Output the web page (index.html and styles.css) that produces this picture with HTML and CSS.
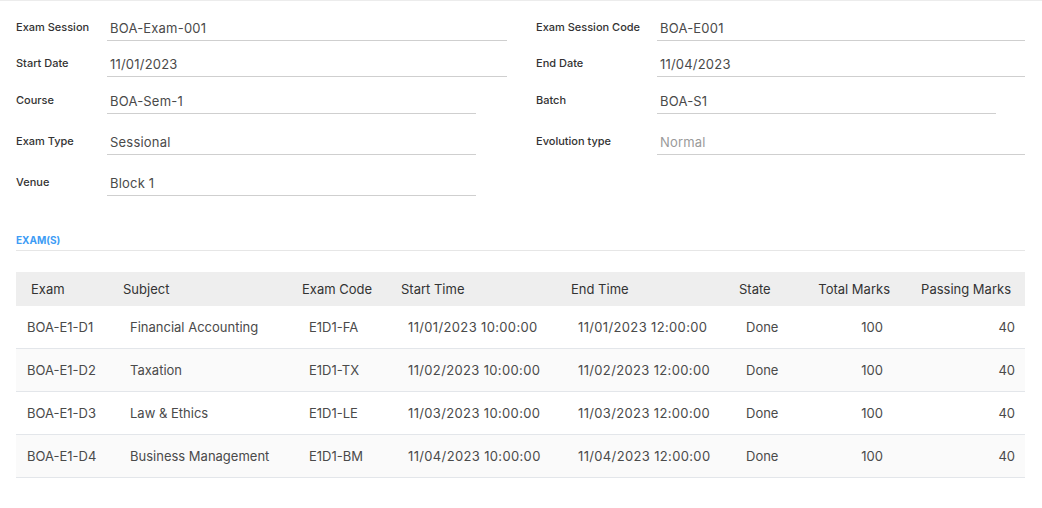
FILE: index.html
```html
<!DOCTYPE html>
<html lang="en">
<head>
<meta charset="utf-8">
<title>Exam Session</title>
<link rel="stylesheet" href="styles.css">
</head>
<body>
<div class="sheet">
  <div class="fields">
    <div class="field"><span class="label">Exam Session</span><span class="value">BOA-Exam-001</span></div>
    <div class="field field-r"><span class="label">Exam Session Code</span><span class="value">BOA-E001</span></div>

    <div class="field"><span class="label">Start Date</span><span class="value">11/01/2023</span></div>
    <div class="field field-r"><span class="label">End Date</span><span class="value">11/04/2023</span></div>

    <div class="field gap1"><span class="label">Course</span><span class="value short">BOA-Sem-1</span></div>
    <div class="field field-r gap1"><span class="label">Batch</span><span class="value short">BOA-S1</span></div>

    <div class="field gap5"><span class="label">Exam Type</span><span class="value short">Sessional</span></div>
    <div class="field field-r gap5"><span class="label">Evolution type</span><span class="value muted">Normal</span></div>

    <div class="field gap5"><span class="label">Venue</span><span class="value short">Block 1</span></div>
  </div>

  <div class="section-title">EXAM(S)</div>

  <table class="grid">
    <colgroup>
      <col class="c1"><col class="c2"><col class="c3"><col class="c4"><col class="c5"><col class="c6"><col class="c7"><col class="c8">
    </colgroup>
    <thead>
      <tr>
        <th class="k1">Exam</th>
        <th>Subject</th>
        <th>Exam Code</th>
        <th>Start Time</th>
        <th>End Time</th>
        <th>State</th>
        <th class="num h7">Total Marks</th>
        <th class="num h8">Passing Marks</th>
      </tr>
    </thead>
    <tbody>
      <tr>
        <td class="k1">BOA-E1-D1</td><td>Financial Accounting</td><td>E1D1-FA</td><td class="dt">11/01/2023 10:00:00</td><td class="dt">11/01/2023 12:00:00</td><td>Done</td><td class="num d7">100</td><td class="num d8">40</td>
      </tr>
      <tr class="alt">
        <td class="k1">BOA-E1-D2</td><td>Taxation</td><td>E1D1-TX</td><td class="dt">11/02/2023 10:00:00</td><td class="dt">11/02/2023 12:00:00</td><td>Done</td><td class="num d7">100</td><td class="num d8">40</td>
      </tr>
      <tr>
        <td class="k1">BOA-E1-D3</td><td>Law &amp; Ethics</td><td>E1D1-LE</td><td class="dt">11/03/2023 10:00:00</td><td class="dt">11/03/2023 12:00:00</td><td>Done</td><td class="num d7">100</td><td class="num d8">40</td>
      </tr>
      <tr class="alt">
        <td class="k1">BOA-E1-D4</td><td>Business Management</td><td>E1D1-BM</td><td class="dt">11/04/2023 10:00:00</td><td class="dt">11/04/2023 12:00:00</td><td>Done</td><td class="num d7">100</td><td class="num d8">40</td>
      </tr>
    </tbody>
  </table>
</div>
</body>
</html>
```
FILE: styles.css
```css
* { box-sizing: border-box; }

html, body {
  margin: 0;
  background: #ffffff;
}

body {
  font-family: Inter, "Noto Sans", "Liberation Sans", sans-serif;
  color: #4c4c4c;
}

.sheet {
  border-top: 1px solid #ececec;
  padding: 14px 17px 20px 16px;
}

.fields {
  display: grid;
  grid-template-columns: 491px 1fr;
  column-gap: 29px;
  row-gap: 10px;
}

.field {
  display: grid;
  grid-template-columns: 91px 1fr;
  align-items: start;
}

.field-r {
  grid-template-columns: 121px 1fr;
  grid-column: 2;
}

.gap1 { margin-top: 1px; }
.gap5 { margin-top: 5px; }

.label {
  font-size: 11px;
  font-weight: 500;
  color: #333333;
  line-height: 20px;
  padding-top: 2px;
  white-space: nowrap;
}

.value {
  font-size: 13px;
  line-height: 20px;
  padding: 3px 3px 2px 3px;
  border-bottom: 1px solid #cfcfcf;
  color: #4a4a4a;
  letter-spacing: 0.2px;
}

.value.short { margin-right: 31px; }
.field-r .value.short { margin-right: 29px; }

.value.muted { color: #9a9a9a; }

.section-title {
  margin-top: 37px;
  font-size: 10px;
  font-weight: 700;
  line-height: 14px;
  color: #3d9cf5;
  padding-bottom: 3px;
  border-bottom: 1px solid #e6e6e6;
}

.grid {
  margin-top: 21px;
  width: 100%;
  border-collapse: collapse;
  table-layout: fixed;
  font-size: 13px;
}

.c1 { width: 100px; }
.c2 { width: 179px; }
.c3 { width: 99px; }
.c4 { width: 170px; }
.c5 { width: 168px; }
.c6 { width: 68px; }
.c7 { width: 97px; }
.c8 { width: 128px; }

.grid th {
  background: #eeeeee;
  height: 34px;
  padding: 0 0 0 7px;
  text-align: left;
  font-weight: 400;
  color: #333333;
  white-space: nowrap;
}

.grid td {
  height: 43px;
  padding: 0 0 0 14px;
  color: #4a4a4a;
  border-top: 1px solid #e3e6ea;
  white-space: nowrap;
}

.grid tbody tr:first-child td { border-top: none; height: 42px; }
.grid tbody tr:last-child td { border-bottom: 1px solid #e3e6ea; }

.grid td.dt { letter-spacing: 0.35px; }

.grid .k1 { padding-left: 15px; }
.grid td.k1 { padding-left: 11px; }

.grid tr.alt td { background: #fafafa; }

.grid .num { text-align: right; }
.grid th.h7 { padding: 0 7px 0 0; }
.grid th.h8 { padding: 0 14px 0 0; }
.grid td.d7 { padding: 0 14px 0 0; }
.grid td.d8 { padding: 0 10px 0 0; }
```
